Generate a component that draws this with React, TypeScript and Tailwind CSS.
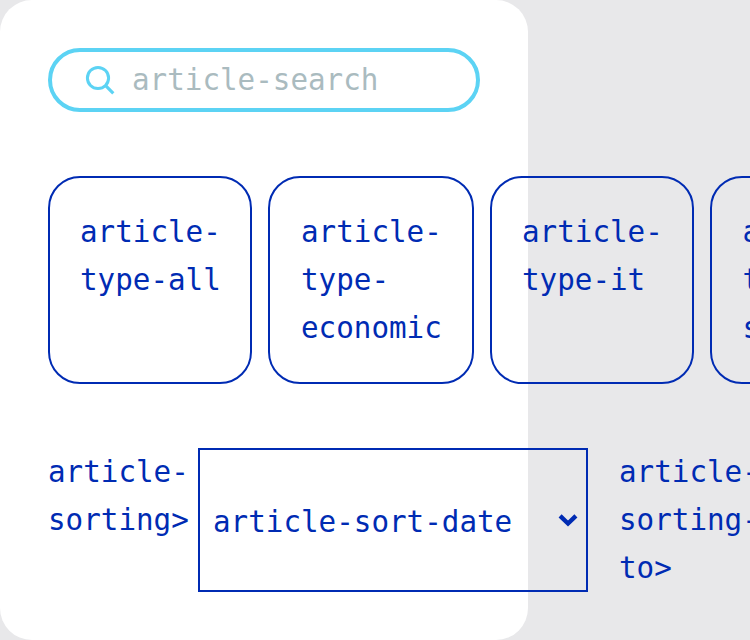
const types = [
  { name: 'article-type-all', size: 'w-[204px] pl-[30px]' },
  { name: 'article-type-economic', size: 'w-[206px] pl-[31px]' },
  { name: 'article-type-it', size: 'w-[204px] pl-[30px]' },
  { name: 'article-type-science', size: 'w-[204px] pl-[30.4px]' },
];

export default function App() {
  return (
    <div className="h-[640px] w-[750px] overflow-hidden bg-[#e8e8ea] font-['DejaVu_Sans_Mono',monospace] text-[29.24px] leading-[48px] text-[#002bb3]">
      <main className="h-[640px] w-[528px] rounded-[32px] bg-white p-12">
        <label className="flex h-16 w-[432px] items-center rounded-full border-4 border-[#5cd3f4] pl-[34px]">
          <svg className="h-7 w-7 shrink-0 overflow-visible" viewBox="0 0 28 28" fill="none" stroke="#5cd3f4" strokeWidth="3">
            <circle cx="12" cy="12" r="10.6" />
            <path d="M19.4 19.4 27.3 27.3" strokeWidth="3.2" />
          </svg>
          <span className="ml-[18px] text-[#aabbbf]">article-search</span>
        </label>

        <div className="mt-16 flex w-[900px] gap-4">
          {types.map(({ name, size }) => (
            <button
              key={name}
              className={`flex h-52 shrink-0 items-start rounded-[32px] border-2 border-[#002bb3] pt-[30px] text-left ${size}`}
            >
              <span className="w-[141px]">{name}</span>
            </button>
          ))}
        </div>

        <div className="mt-16 flex w-[900px]">
          <span className="w-[150px] shrink-0 pr-[9px]">article-sorting&gt;</span>
          <button className="flex h-36 w-[390px] shrink-0 items-center justify-between border-2 border-[#002bb3] pr-[8px] pl-[13px]">
            <span className="pt-[3px] whitespace-nowrap">article-sort-date</span>
            <svg className="h-3 w-[20px] overflow-visible" viewBox="0 0 20 12" fill="none" stroke="#002bb3" strokeWidth="4.4">
              <path d="m2.1 1.9 7.9 7.6 7.9-7.6" />
            </svg>
          </button>
          <span className="ml-[31px] w-[145px] shrink-0">article-sorting-to&gt;</span>
        </div>
      </main>
    </div>
  );
}
